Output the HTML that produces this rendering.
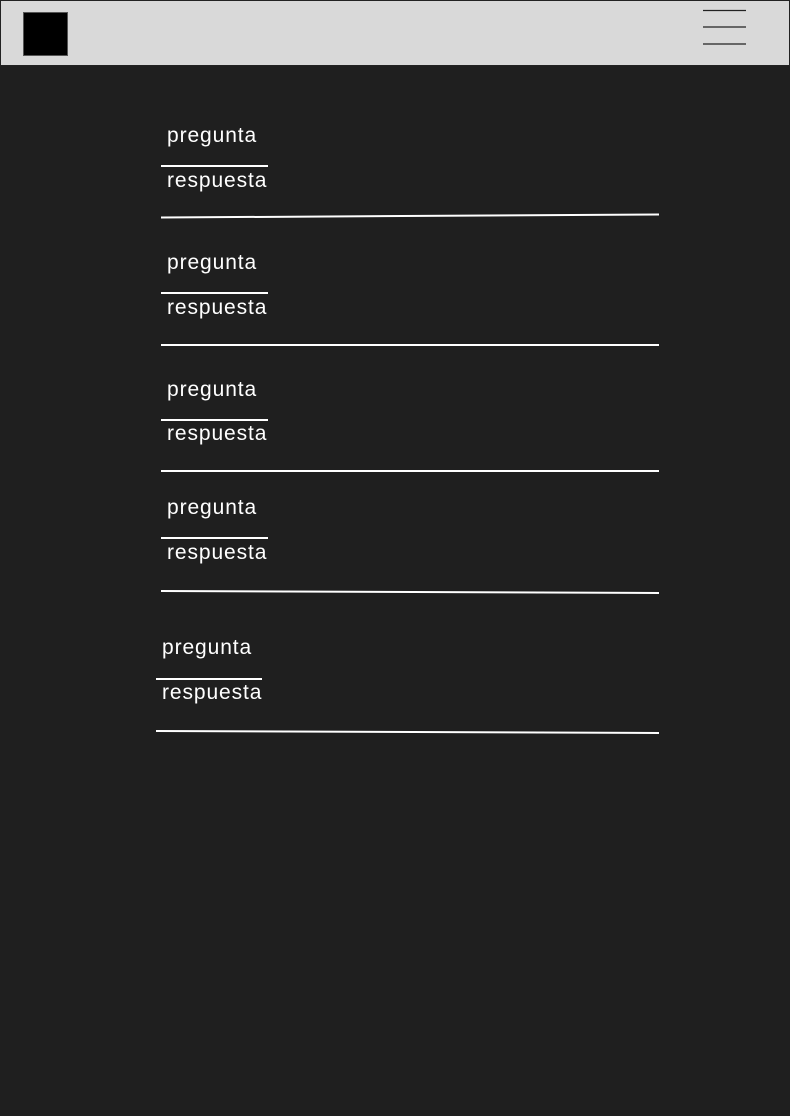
<!DOCTYPE html>
<html><head><meta charset="utf-8"><style>
html,body{margin:0;padding:0}
body{width:790px;height:1116px;background:#1f1f1f;position:relative;overflow:hidden;font-family:"Liberation Sans",sans-serif}
.hdr{position:absolute;left:0;top:0;width:788px;height:64px;background:#d9d9d9;border:1px solid #222}
.logo{position:absolute;left:22px;top:11px;width:45px;height:44px;background:#000;box-sizing:border-box;border:1px solid #555}
.t{position:absolute;color:#fff;font-size:21px;line-height:24px;white-space:nowrap;letter-spacing:0.9px}
svg{position:absolute;left:0;top:0}
</style></head><body>
<div class="hdr"><div class="logo"></div></div>
<svg width="790" height="1116">
<g stroke="#222" stroke-width="1.3">
<line x1="703" y1="10.5" x2="746" y2="10.5"/>
<line x1="703" y1="27" x2="746" y2="27"/>
<line x1="703" y1="44" x2="746" y2="44"/>
</g>
<g stroke="#fff" stroke-width="2">
<line x1="161" y1="166" x2="268" y2="166"/>
<line x1="161" y1="217.5" x2="659" y2="214.5"/>
<line x1="161" y1="293" x2="268" y2="293"/>
<line x1="161" y1="345" x2="659" y2="345"/>
<line x1="161" y1="420" x2="268" y2="420"/>
<line x1="161" y1="471" x2="659" y2="471"/>
<line x1="161" y1="538" x2="268" y2="538"/>
<line x1="161" y1="591" x2="659" y2="593"/>
<line x1="156" y1="679" x2="262" y2="679"/>
<line x1="156" y1="731" x2="659" y2="733"/>
</g>
</svg>
<div class="t" style="left:167px;top:124px">pregunta</div>
<div class="t" style="left:167px;top:169px">respuesta</div>
<div class="t" style="left:167px;top:251px">pregunta</div>
<div class="t" style="left:167px;top:296px">respuesta</div>
<div class="t" style="left:167px;top:378px">pregunta</div>
<div class="t" style="left:167px;top:422px">respuesta</div>
<div class="t" style="left:167px;top:496px">pregunta</div>
<div class="t" style="left:167px;top:541px">respuesta</div>
<div class="t" style="left:162px;top:636px">pregunta</div>
<div class="t" style="left:162px;top:681px">respuesta</div>
</body></html>
